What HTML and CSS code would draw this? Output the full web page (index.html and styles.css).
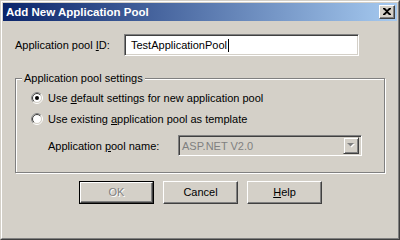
FILE: index.html
```html
<!DOCTYPE html>
<html>
<head>
<meta charset="utf-8">
<link rel="stylesheet" href="styles.css">
</head>
<body>
<div class="window">
  <div class="frame">
    <div class="titlebar">
      <span class="title">Add New Application Pool</span>
      <div class="close">
        <svg width="8" height="7" viewBox="0 0 8 7"><path d="M0 0h2l2 2 2-2h2v1L5 3.5 8 6v1H6L4 5 2 7H0V6l3-2.5L0 1z" fill="#000"/></svg>
      </div>
    </div>
    <div class="body">
      <div class="row-id">
        <span class="label-id">Application pool <u>I</u>D:</span>
        <div class="edit"><span>TestApplicationPool</span><span class="caret"></span></div>
      </div>
      <div class="group">
        <span class="group-title">Application pool settings</span>
        <div class="radio-row first">
          <svg class="radio" width="12" height="12" viewBox="0 0 12 12">
            <circle cx="6" cy="6" r="5.5" fill="none" stroke="#fff"/>
            <path d="M2.1 9.9A5.5 5.5 0 0 1 9.9 2.1" fill="none" stroke="#808080"/>
            <circle cx="6" cy="6" r="4.5" fill="#fff" stroke="#d4d0c8"/>
            <path d="M2.8 9.2A4.5 4.5 0 0 1 9.2 2.8" fill="none" stroke="#404040"/>
            <circle cx="6" cy="6" r="2" fill="#000"/>
          </svg>
          <span>Use <u>d</u>efault settings for new application pool</span>
        </div>
        <div class="radio-row second">
          <svg class="radio" width="12" height="12" viewBox="0 0 12 12">
            <circle cx="6" cy="6" r="5.5" fill="none" stroke="#fff"/>
            <path d="M2.1 9.9A5.5 5.5 0 0 1 9.9 2.1" fill="none" stroke="#808080"/>
            <circle cx="6" cy="6" r="4.5" fill="#fff" stroke="#d4d0c8"/>
            <path d="M2.8 9.2A4.5 4.5 0 0 1 9.2 2.8" fill="none" stroke="#404040"/>
          </svg>
          <span>Use existing <u>a</u>pplication pool as template</span>
        </div>
        <div class="name-row">
          <span class="label-name">Application <u>p</u>ool name:</span>
          <div class="combo">
            <span class="combo-text">ASP.NET V2.0</span>
            <div class="combo-btn">
              <svg width="8" height="5" viewBox="0 0 8 5"><path d="M1 1h7L4.5 4.5z" fill="#fff"/><path d="M0 0h7L3.5 3.5z" fill="#808080"/></svg>
            </div>
          </div>
        </div>
      </div>
      <div class="buttons">
        <div class="btn default"><div class="btn-inner disabled">OK</div></div>
        <div class="btn"><div class="btn-inner">Cancel</div></div>
        <div class="btn"><div class="btn-inner"><u>H</u>elp</div></div>
      </div>
    </div>
  </div>
</div>
</body>
</html>
```
FILE: styles.css
```css
* { box-sizing: border-box; }
html, body { margin: 0; padding: 0; background: #d4d0c8; height: 100%; }
body {
  font-family: "Liberation Sans", Arial, sans-serif;
  font-size: 11px;
  color: #000;
}
u { text-decoration: underline; text-underline-offset: 1px; }

.window {
  width: 400px;
  height: 100vh;
  min-height: 219px;
  border: 1px solid;
  border-color: #d4d0c8 #404040 #404040 #d4d0c8;
  background: #d4d0c8;
  display: flex;
}
.frame {
  flex: 1;
  border: 1px solid;
  border-color: #ffffff #808080 #808080 #ffffff;
  padding: 1px;
  display: flex;
  flex-direction: column;
}
.titlebar {
  flex: none;
  height: 18px;
  background: linear-gradient(to right, #0a246a, #a6caf0);
  display: flex;
  align-items: center;
  justify-content: space-between;
  padding: 0 2px 0 3px;
}
.title {
  color: #fff;
  font-weight: bold;
  font-size: 11.5px;
  line-height: 13px;
}
.close {
  width: 16px;
  height: 14px;
  background: #d4d0c8;
  border: 1px solid;
  border-color: #fff #404040 #404040 #fff;
  box-shadow: inset -1px -1px 0 #808080;
  display: flex;
  align-items: center;
  justify-content: center;
  padding-bottom: 1px;
}
.close svg { display: block; }

.body {
  flex: 1;
  display: flex;
  flex-direction: column;
}
.body > * { flex: none; }
.row-id {
  margin: 13px 0 0 12px;
  height: 22px;
  display: flex;
  align-items: center;
}
.label-id { width: 109px; }
.edit {
  width: 235px;
  height: 22px;
  background: #fff;
  border: 1px solid;
  border-color: #808080 #fff #fff #808080;
  box-shadow: inset 1px 1px 0 #404040, inset -1px -1px 0 #d4d0c8;
  display: flex;
  align-items: center;
  padding-left: 6px;
}
.caret {
  width: 1px;
  height: 13px;
  background: #000;
  margin-left: 1px;
}

.group {
  margin: 22px 12px 0 12px;
  height: 95px;
  border: 1px solid #808080;
  box-shadow: inset 1px 1px 0 #fff, 1px 1px 0 #fff;
  display: flex;
  flex-direction: column;
  padding-left: 15px;
}
.group > * { flex: none; }
.group-title {
  align-self: flex-start;
  margin: -7px 0 0 -9px;
  padding: 0 2px;
  line-height: 13px;
  background: #d4d0c8;
}
.radio-row {
  display: flex;
  align-items: center;
  height: 14px;
  gap: 5px;
}
.radio-row.first { margin-top: 6px; }
.radio-row.second { margin-top: 7px; }
.radio { display: block; flex: none; }

.name-row {
  display: flex;
  align-items: center;
  margin-top: 9px;
  padding-left: 17px;
}
.label-name { width: 130px; }
.combo {
  width: 184px;
  height: 21px;
  border: 1px solid;
  border-color: #808080 #fff #fff #808080;
  box-shadow: inset 1px 1px 0 #404040, inset -1px -1px 0 #d4d0c8;
  padding: 2px;
  display: flex;
  align-items: center;
  justify-content: space-between;
}
.combo-text {
  color: #808080;
  padding-left: 1px;
}
.combo-btn {
  width: 16px;
  height: 17px;
  border: 1px solid;
  border-color: #d4d0c8 #404040 #404040 #d4d0c8;
  box-shadow: inset 1px 1px 0 #fff, inset -1px -1px 0 #808080;
  display: flex;
  align-items: center;
  justify-content: center;
}
.combo-btn svg { display: block; }

.buttons {
  display: flex;
  gap: 9px;
  margin: 8px 0 0 76px;
}
.btn {
  width: 75px;
  height: 23px;
  border: 1px solid;
  border-color: #fff #404040 #404040 #fff;
  box-shadow: inset -1px -1px 0 #808080;
  display: flex;
}
.btn.default {
  border: 1px solid #000;
  box-shadow: none;
}
.btn-inner {
  flex: 1;
  display: flex;
  align-items: center;
  justify-content: center;
  padding-bottom: 1px;
}
.btn.default .btn-inner {
  border: 1px solid;
  border-color: #fff #404040 #404040 #fff;
  box-shadow: inset -1px -1px 0 #808080;
}
.btn-inner.disabled {
  color: #808080;
  text-shadow: 1px 1px 0 #fff;
}
```
